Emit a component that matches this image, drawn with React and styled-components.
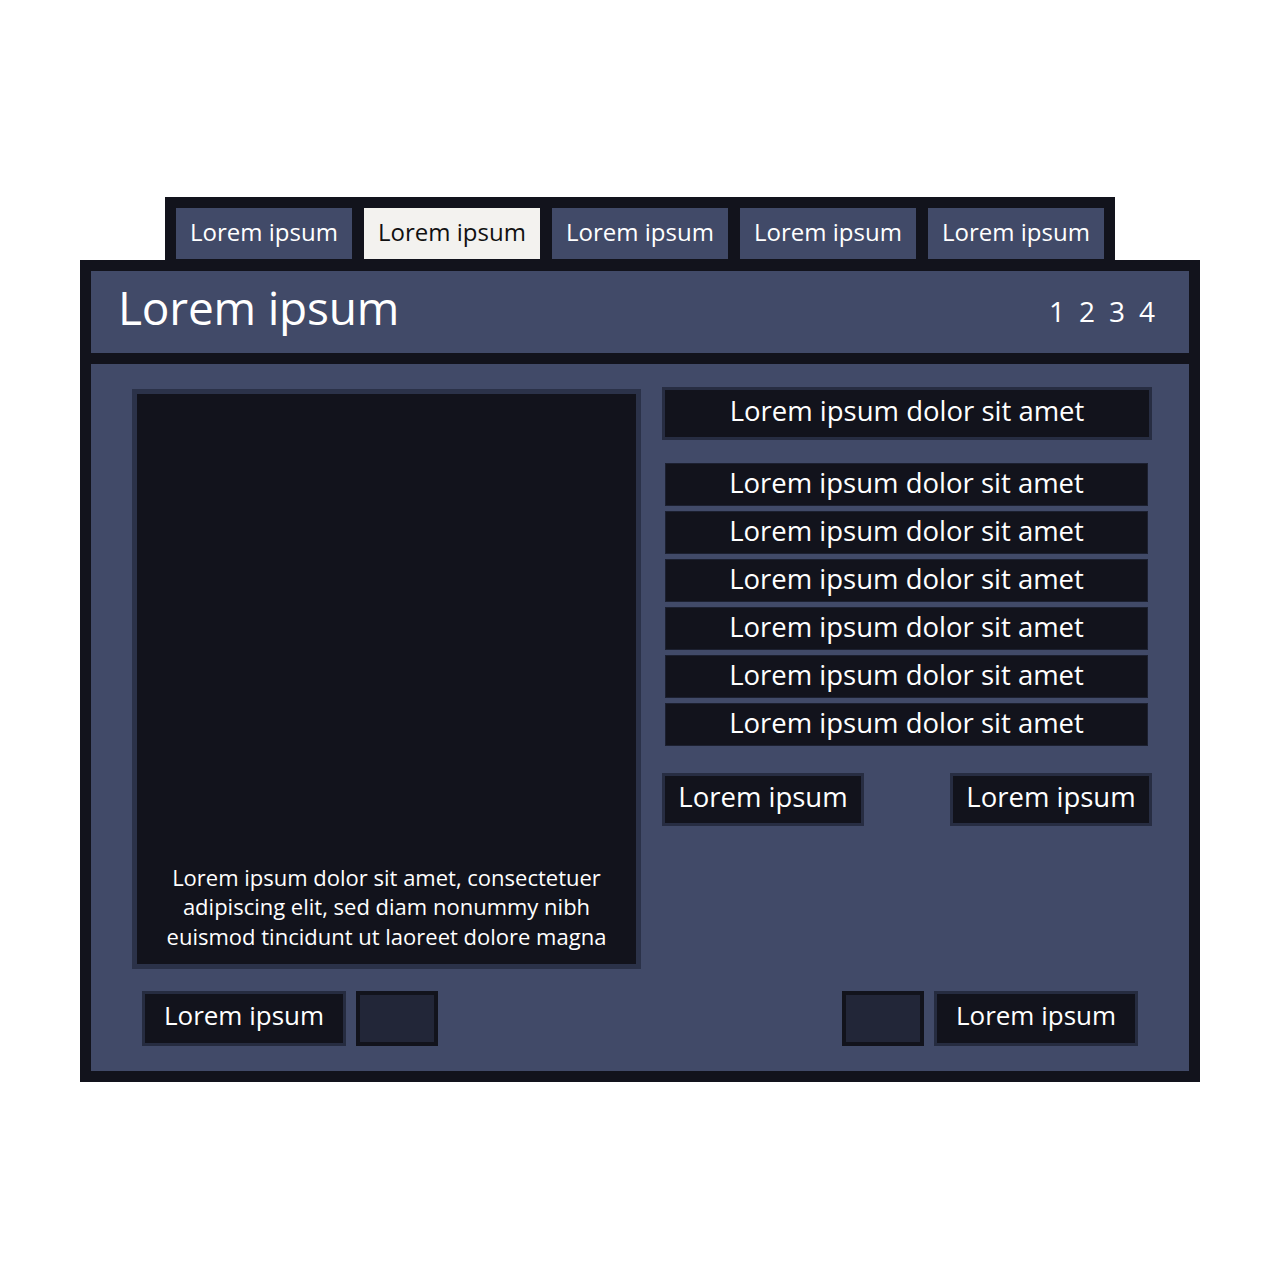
import React from "react";
import styled, { createGlobalStyle } from "styled-components";

const GlobalStyle = createGlobalStyle`
  body {
    margin: 0;
    background: #ffffff;
    font-family: "Open Sans", "Noto Sans", sans-serif;
  }
`;

const DARK = "#12131c";
const PANEL = "#414a68";

const tabs = ["Lorem ipsum", "Lorem ipsum", "Lorem ipsum", "Lorem ipsum", "Lorem ipsum"];
const listItems = Array.from({ length: 6 }, () => "Lorem ipsum dolor sit amet");

const App = () => {
  return (
    <>
      <GlobalStyle />
      <Page>
        <TabStrip>
          {tabs.map((t, i) => (
            <Tab key={i} active={i === 1}>
              {t}
            </Tab>
          ))}
        </TabStrip>
        <Frame>
          <Header>
            <Title>Lorem ipsum</Title>
            <Pager>
              {[1, 2, 3, 4].map((n) => (
                <span key={n}>{n}</span>
              ))}
            </Pager>
          </Header>
          <Body>
            <Columns>
              <ImageBox>
                <Caption>
                  Lorem ipsum dolor sit amet, consectetuer
                  <br />
                  adipiscing elit, sed diam nonummy nibh
                  <br />
                  euismod tincidunt ut laoreet dolore magna
                </Caption>
              </ImageBox>
              <RightColumn>
                <HeadItem>Lorem ipsum dolor sit amet</HeadItem>
                <List>
                  {listItems.map((t, i) => (
                    <ListItem key={i}>{t}</ListItem>
                  ))}
                </List>
                <ButtonRow>
                  <ActionButton>Lorem ipsum</ActionButton>
                  <ActionButton>Lorem ipsum</ActionButton>
                </ButtonRow>
              </RightColumn>
            </Columns>
            <FooterRow>
              <FooterGroup>
                <FooterButton>Lorem ipsum</FooterButton>
                <Square />
              </FooterGroup>
              <FooterGroup>
                <Square />
                <FooterButton>Lorem ipsum</FooterButton>
              </FooterGroup>
            </FooterRow>
          </Body>
        </Frame>
      </Page>
    </>
  );
};

export default App;

const Page = styled.div`
  display: flex;
  flex-direction: column;
  align-items: flex-start;
  padding: 197px 0 0 80px;
  height: 1280px;
  box-sizing: border-box;
`;

const TabStrip = styled.div`
  display: flex;
  gap: 12px;
  margin-left: 85px;
  width: 950px;
  box-sizing: border-box;
  padding: 11px 11px 1px;
  background: ${DARK};
`;

const Tab = styled.div`
  width: 176px;
  height: 51px;
  display: flex;
  align-items: center;
  justify-content: center;
  padding-bottom: 5px;
  box-sizing: border-box;
  background: ${(props) => (props.active ? "#f3f2ef" : PANEL)};
  color: ${(props) => (props.active ? "#111111" : "#ffffff")};
  font-size: 24px;
`;

const Frame = styled.div`
  width: 1120px;
  box-sizing: border-box;
  border: 11px solid ${DARK};
  background: ${DARK};
  display: flex;
  flex-direction: column;
  gap: 11px;
`;

const Header = styled.div`
  height: 82px;
  background: ${PANEL};
  display: flex;
  align-items: center;
  justify-content: space-between;
  padding: 0 34px 0 27px;
  color: #ffffff;
`;

const Title = styled.div`
  font-size: 46px;
  letter-spacing: -0.2px;
  margin-top: -10px;
`;

const Pager = styled.div`
  display: flex;
  gap: 14px;
  font-size: 28px;
  margin-top: -2px;
`;

const Body = styled.div`
  height: 707px;
  box-sizing: border-box;
  background: ${PANEL};
  padding: 23px 37px 25px 41px;
  display: flex;
  flex-direction: column;
  gap: 22px;
`;

const Columns = styled.div`
  display: flex;
  gap: 21px;
  align-items: flex-start;
`;

const ImageBox = styled.div`
  width: 509px;
  height: 580px;
  margin-top: 2px;
  box-sizing: border-box;
  border: 5px solid #2b3249;
  background: ${DARK};
  display: flex;
  flex-direction: column;
  justify-content: flex-end;
`;

const Caption = styled.p`
  margin: 0 0 13px;
  color: #ffffff;
  font-size: 22px;
  line-height: 29.5px;
  text-align: center;
`;

const RightColumn = styled.div`
  width: 490px;
  display: flex;
  flex-direction: column;
`;

const DarkBox = styled.div`
  display: flex;
  align-items: center;
  justify-content: center;
  box-sizing: border-box;
  background: ${DARK};
  color: #ffffff;
`;

const HeadItem = styled(DarkBox)`
  height: 53px;
  border: 3px solid #272d42;
  font-size: 27.5px;
  padding-bottom: 6px;
`;

const List = styled.div`
  display: flex;
  flex-direction: column;
  gap: 5px;
  margin: 23px 4px 0 3px;
`;

const ListItem = styled(DarkBox)`
  height: 43px;
  border: 1px solid #1c2030;
  font-size: 27.5px;
  padding-bottom: 4px;
`;

const ButtonRow = styled.div`
  display: flex;
  justify-content: space-between;
  margin-top: 27px;
`;

const ActionButton = styled(DarkBox)`
  width: 202px;
  height: 53px;
  border: 3px solid #272d42;
  font-size: 27.5px;
  padding-bottom: 6px;
`;

const FooterRow = styled.div`
  display: flex;
  justify-content: space-between;
  padding: 0 14px 0 10px;
`;

const FooterGroup = styled.div`
  display: flex;
  gap: 10px;
`;

const FooterButton = styled(DarkBox)`
  width: 204px;
  height: 55px;
  border: 3px solid #262c40;
  font-size: 26px;
  padding-bottom: 7px;
`;

const Square = styled.div`
  width: 82px;
  height: 55px;
  box-sizing: border-box;
  border: 4px solid ${DARK};
  background: #222638;
`;
